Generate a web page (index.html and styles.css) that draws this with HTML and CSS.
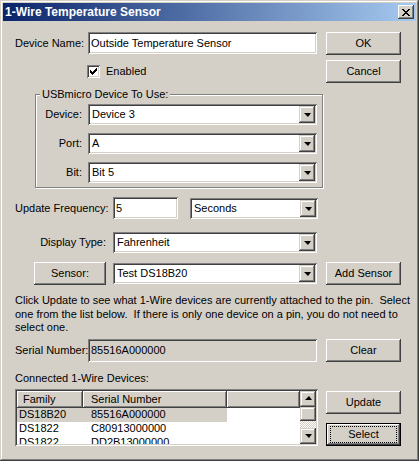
FILE: index.html
```html
<!DOCTYPE html>
<html>
<head>
<meta charset="utf-8">
<title>1-Wire Temperature Sensor</title>
<link rel="stylesheet" href="styles.css">
</head>
<body>
<div class="window">
  <div class="titlebar">
    <span class="title">1-Wire Temperature Sensor</span>
    <span class="close"><svg width="8" height="7" viewBox="0 0 8 7" shape-rendering="crispEdges"><path d="M0 0h2v1h-2zM6 0h2v1h-2zM1 1h2v1h-2zM5 1h2v1h-2zM2 2h4v1h-4zM3 3h2v1h-2zM2 4h4v1h-4zM1 5h2v1h-2zM5 5h2v1h-2zM0 6h2v1h-2zM6 6h2v1h-2z" fill="#000"/></svg></span>
  </div>
  <div class="client">
    <div class="row r-name">
      <div class="left">
        <span class="lbl w73">Device Name:</span>
        <div class="field w229 h22">Outside Temperature Sensor</div>
      </div>
      <div class="btn">OK</div>
    </div>
    <div class="row r-enabled">
      <div class="left check-wrap">
        <span class="checkbox"><svg width="7" height="7" viewBox="0 0 7 7" shape-rendering="crispEdges"><path d="M0 2h1v3h-1zM1 3h1v3h-1zM2 4h1v3h-1zM3 3h1v3h-1zM4 2h1v3h-1zM5 1h1v3h-1zM6 0h1v3h-1z" fill="#000"/></svg></span>
        <span class="check-lbl">Enabled</span>
      </div>
      <div class="btn">Cancel</div>
    </div>
    <div class="group">
      <div class="legend">USBmicro Device To Use:</div>
      <div class="grow first">
        <span class="glbl">Device:</span>
        <div class="combo w229"><span class="val">Device 3</span><span class="dd"><i class="arrow"></i></span></div>
      </div>
      <div class="grow">
        <span class="glbl">Port:</span>
        <div class="combo w229"><span class="val">A</span><span class="dd"><i class="arrow"></i></span></div>
      </div>
      <div class="grow">
        <span class="glbl">Bit:</span>
        <div class="combo w229"><span class="val">Bit 5</span><span class="dd"><i class="arrow"></i></span></div>
      </div>
    </div>
    <div class="row r-freq">
      <div class="left">
        <span class="lbl w98">Update Frequency:</span>
        <div class="field w65 h22">5</div>
        <div class="combo w128 gap12"><span class="val">Seconds</span><span class="dd"><i class="arrow"></i></span></div>
      </div>
    </div>
    <div class="row r-disp">
      <div class="left">
        <span class="lbl w98 right">Display Type:</span>
        <div class="combo w204"><span class="val">Fahrenheit</span><span class="dd"><i class="arrow"></i></span></div>
      </div>
    </div>
    <div class="row r-sensor">
      <div class="left">
        <div class="btn sensor-btn">Sensor:</div>
        <div class="combo w204 gap7"><span class="val">Test DS18B20</span><span class="dd"><i class="arrow"></i></span></div>
      </div>
      <div class="btn">Add Sensor</div>
    </div>
    <p class="para">Click Update to see what 1-Wire devices are currently attached to the pin.&nbsp; Select<br>one from the list below.&nbsp; If there is only one device on a pin, you do not need to<br>select one.</p>
    <div class="row r-serial">
      <div class="left">
        <span class="lbl w73">Serial Number:</span>
        <div class="field w229 h23 disabled">85516A000000</div>
      </div>
      <div class="btn">Clear</div>
    </div>
    <div class="conn-lbl">Connected 1-Wire Devices:</div>
    <div class="row r-list">
      <div class="listview">
        <div class="lv-main">
          <div class="lv-head">
            <span class="hcell c1">Family</span>
            <span class="hcell c2">Serial Number</span>
            <span class="hcell c3"></span>
          </div>
          <div class="lv-row sel"><span class="cell c1">DS18B20</span><span class="cell c2">85516A000000</span></div>
          <div class="lv-row"><span class="cell c1">DS1822</span><span class="cell c2">C80913000000</span></div>
          <div class="lv-row"><span class="cell c1">DS1822</span><span class="cell c2">DD2B13000000</span></div>
        </div>
        <div class="scrollbar">
          <span class="sb-btn"><i class="arrow up"></i></span>
          <span class="sb-thumb"></span>
          <span class="sb-track"></span>
          <span class="sb-btn"><i class="arrow"></i></span>
        </div>
      </div>
      <div class="btn-col">
        <div class="btn">Update</div>
        <div class="btn default"><span class="focus">Select</span></div>
      </div>
    </div>
  </div>
</div>
</body>
</html>
```
FILE: styles.css
```css
* { box-sizing: border-box; margin: 0; padding: 0; }
html, body { margin: 0; background: #d4d0c8; }
body {
  font-family: "Liberation Sans", Arial, sans-serif;
  font-size: 11px;
  line-height: 13px;
  color: #000;
}

.window {
  width: 419px;
  height: 461px;
  background: #d4d0c8;
  padding: 3px;
  box-shadow: inset -1px -1px #404040, inset 1px 1px #d4d0c8,
              inset -2px -2px #808080, inset 2px 2px #ffffff;
}

.titlebar {
  height: 18px;
  background: linear-gradient(to right, #0a246a, #a6caf0);
  display: flex;
  align-items: center;
  justify-content: space-between;
  padding: 0 2px;
}
.title {
  color: #fff;
  font-weight: bold;
  font-size: 12px;
  letter-spacing: 0;
}
.close {
  width: 16px;
  height: 14px;
  background: #d4d0c8;
  display: flex;
  align-items: center;
  justify-content: center;
  box-shadow: inset -1px -1px #404040, inset 1px 1px #ffffff,
              inset -2px -2px #808080, inset 2px 2px #d4d0c8;
}
.close svg { display: block; margin-left: -1px; }

.client { padding: 0 15px 0 12px; }

.row { display: flex; justify-content: space-between; align-items: flex-start; }
.left { display: flex; align-items: center; }

.r-name { margin-top: 11px; }
.r-enabled { margin-top: 5px; }
.r-freq { margin-top: 9px; }
.r-disp { margin-top: 13px; }
.r-sensor { margin-top: 9px; }
.r-serial { margin-top: 4px; }
.r-list { margin-top: 4px; }

.lbl { display: block; white-space: nowrap; }
.lbl.right { text-align: right; padding-right: 7px; }
.w73 { width: 73px; }
.w98 { width: 98px; }
.w229 { width: 229px; }
.w204 { width: 204px; }
.w128 { width: 128px; }
.w65 { width: 65px; }
.h22 { height: 22px; }
.h23 { height: 23px; }
.gap12 { margin-left: 12px; }
.gap7 { margin-left: 7px; }

.field {
  background: #fff;
  display: flex;
  align-items: center;
  padding: 0 3px;
  white-space: nowrap;
  box-shadow: inset 1px 1px #808080, inset -1px -1px #ffffff,
              inset 2px 2px #404040, inset -2px -2px #d4d0c8;
}
.field.disabled { background: #d4d0c8; }

.combo {
  height: 21px;
  background: #fff;
  display: flex;
  padding: 2px;
  box-shadow: inset 1px 1px #808080, inset -1px -1px #ffffff,
              inset 2px 2px #404040, inset -2px -2px #d4d0c8;
}
.combo .val {
  flex: 1;
  display: flex;
  align-items: center;
  padding-left: 2px;
  white-space: nowrap;
}
.combo .dd {
  width: 16px;
  height: 17px;
  background: #d4d0c8;
  display: flex;
  align-items: center;
  justify-content: center;
  box-shadow: inset -1px -1px #404040, inset 1px 1px #d4d0c8,
              inset -2px -2px #808080, inset 2px 2px #ffffff;
}
.arrow {
  display: block;
  width: 0;
  height: 0;
  border-left: 4px solid transparent;
  border-right: 3px solid transparent;
  border-top: 4px solid #000;
  margin-top: 1px;
}
.arrow.up {
  border-top: 0;
  border-bottom: 4px solid #000;
  margin-top: -1px;
}

.btn {
  width: 75px;
  height: 23px;
  background: #d4d0c8;
  display: flex;
  align-items: center;
  justify-content: center;
  white-space: nowrap;
  box-shadow: inset -1px -1px #404040, inset 1px 1px #ffffff,
              inset -2px -2px #808080, inset 2px 2px #d4d0c8;
}
.sensor-btn { width: 72px; margin-left: 19px; }

.check-wrap { margin-left: 72px; height: 23px; }
.checkbox {
  width: 13px;
  height: 13px;
  background: #fff;
  display: flex;
  align-items: center;
  justify-content: center;
  box-shadow: inset 1px 1px #808080, inset -1px -1px #ffffff,
              inset 2px 2px #404040, inset -2px -2px #d4d0c8;
}
.check-lbl { margin-left: 6px; }

.group {
  margin: 11px 0 0 20px;
  width: 288px;
  height: 94px;
  border: 1px solid #808080;
  box-shadow: inset 1px 1px #ffffff, 1px 1px #ffffff;
  padding: 0;
}
.legend {
  width: fit-content;
  height: 13px;
  margin: -7px 0 0 4px;
  padding: 0 2px;
  background: #d4d0c8;
  white-space: nowrap;
}
.grow { display: flex; align-items: center; margin-top: 8px; }
.grow.first { margin-top: 3px; }
.glbl { width: 52px; padding-right: 6px; text-align: right; }

.para { margin-top: 9px; white-space: nowrap; line-height: 13.5px; }

.conn-lbl { margin-top: 10px; }

.listview {
  width: 303px;
  height: 57px;
  background: #fff;
  padding: 2px;
  display: flex;
  box-shadow: inset 1px 1px #808080, inset -1px -1px #ffffff,
              inset 2px 2px #404040, inset -2px -2px #d4d0c8;
}
.lv-main { width: 283px; height: 53px; overflow: hidden; }
.lv-head { display: flex; height: 17px; }
.hcell {
  height: 17px;
  background: #d4d0c8;
  display: flex;
  align-items: center;
  white-space: nowrap;
  box-shadow: inset -1px -1px #404040, inset 1px 1px #ffffff,
              inset -2px -2px #808080;
}
.hcell.c1 { width: 66px; padding-left: 6px; }
.hcell.c2 { width: 144px; padding-left: 8px; }
.hcell.c3 { flex: 1; }
.lv-row { display: flex; height: 14px; align-items: center; }
.lv-row .cell { white-space: nowrap; height: 14px; display: flex; align-items: center; }
.lv-row .c1 { width: 66px; padding-left: 2px; }
.lv-row .c2 { width: 144px; padding-left: 8px; }
.lv-row.sel .cell { background: #d4d0c8; }

.scrollbar { width: 16px; height: 53px; display: flex; flex-direction: column; }
.sb-btn, .sb-thumb {
  width: 16px;
  background: #d4d0c8;
  display: flex;
  align-items: center;
  justify-content: center;
  box-shadow: inset -1px -1px #404040, inset 1px 1px #d4d0c8,
              inset -2px -2px #808080, inset 2px 2px #ffffff;
}
.sb-btn { height: 16px; }
.sb-thumb { height: 14px; }
.sb-track {
  height: 7px;
  background: repeating-conic-gradient(#ffffff 0 25%, #d4d0c8 0 50%) 0 0 / 2px 2px;
}

.btn-col { display: flex; flex-direction: column; }
.btn-col .btn:first-child { margin-top: 2px; }
.btn.default {
  margin-top: 9px;
  box-shadow: inset 0 0 0 1px #000, inset -2px -2px #404040, inset 2px 2px #ffffff,
              inset -3px -3px #808080;
}
.focus {
  width: 67px;
  height: 17px;
  display: flex;
  align-items: center;
  justify-content: center;
  outline: 1px dotted #000;
  outline-offset: -1px;
}
```
